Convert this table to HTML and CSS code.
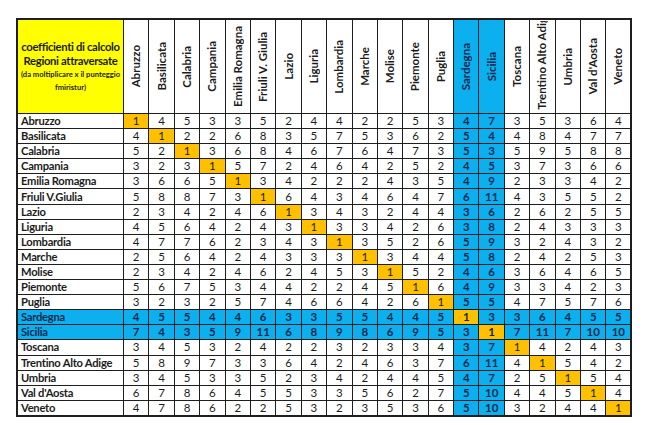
FILE: index.html
```html
<!DOCTYPE html>
<html lang="it">
<head>
<meta charset="utf-8">
<title>Coefficienti di calcolo</title>
<link rel="stylesheet" href="styles.css">
</head>
<body>
<table class="grid">
<colgroup>
<col class="c-label">
<col class="c-n"><col class="c-n"><col class="c-n"><col class="c-n"><col class="c-n">
<col class="c-n"><col class="c-n"><col class="c-n"><col class="c-n"><col class="c-n">
<col class="c-n"><col class="c-n"><col class="c-n"><col class="c-n"><col class="c-n">
<col class="c-n"><col class="c-n"><col class="c-n"><col class="c-n"><col class="c-n">
</colgroup>
<thead>
<tr>
<th class="title">
<div class="t1">coefficienti di calcolo</div>
<div class="t1">Regioni attraversate</div>
<div class="t2">(da moltiplicare x il punteggio</div>
<div class="t2">fmiristur)</div>
</th>
<th><div class="vh"><span>Abruzzo</span></div></th>
<th><div class="vh"><span>Basilicata</span></div></th>
<th><div class="vh"><span>Calabria</span></div></th>
<th><div class="vh"><span>Campania</span></div></th>
<th><div class="vh"><span>Emilia Romagna</span></div></th>
<th><div class="vh"><span>Friuli V. Giulia</span></div></th>
<th><div class="vh"><span>Lazio</span></div></th>
<th><div class="vh"><span>Liguria</span></div></th>
<th><div class="vh"><span>Lombardia</span></div></th>
<th><div class="vh"><span>Marche</span></div></th>
<th><div class="vh"><span>Molise</span></div></th>
<th><div class="vh"><span>Piemonte</span></div></th>
<th><div class="vh"><span>Puglia</span></div></th>
<th class="b"><div class="vh"><span>Sardegna</span></div></th>
<th class="b"><div class="vh"><span>Sicilia</span></div></th>
<th><div class="vh"><span>Toscana</span></div></th>
<th><div class="vh bottom"><span>Trentino Alto Adige</span></div></th>
<th><div class="vh"><span>Umbria</span></div></th>
<th><div class="vh"><span>Val d'Aosta</span></div></th>
<th><div class="vh"><span>Veneto</span></div></th>
</tr>
</thead>
<tbody>
<tr><th>Abruzzo</th><td class="o">1</td><td>4</td><td>5</td><td>3</td><td>3</td><td>5</td><td>2</td><td>4</td><td>4</td><td>2</td><td>2</td><td>5</td><td>3</td><td class="b">4</td><td class="b">7</td><td>3</td><td>5</td><td>3</td><td>6</td><td>4</td></tr>
<tr><th>Basilicata</th><td>4</td><td class="o">1</td><td>2</td><td>2</td><td>6</td><td>8</td><td>3</td><td>5</td><td>7</td><td>5</td><td>3</td><td>6</td><td>2</td><td class="b">5</td><td class="b">4</td><td>4</td><td>8</td><td>4</td><td>7</td><td>7</td></tr>
<tr><th>Calabria</th><td>5</td><td>2</td><td class="o">1</td><td>3</td><td>6</td><td>8</td><td>4</td><td>6</td><td>7</td><td>6</td><td>4</td><td>7</td><td>3</td><td class="b">5</td><td class="b">3</td><td>5</td><td>9</td><td>5</td><td>8</td><td>8</td></tr>
<tr><th>Campania</th><td>3</td><td>2</td><td>3</td><td class="o">1</td><td>5</td><td>7</td><td>2</td><td>4</td><td>6</td><td>4</td><td>2</td><td>5</td><td>2</td><td class="b">4</td><td class="b">5</td><td>3</td><td>7</td><td>3</td><td>6</td><td>6</td></tr>
<tr><th>Emilia Romagna</th><td>3</td><td>6</td><td>6</td><td>5</td><td class="o">1</td><td>3</td><td>4</td><td>2</td><td>2</td><td>2</td><td>4</td><td>3</td><td>5</td><td class="b">4</td><td class="b">9</td><td>2</td><td>3</td><td>3</td><td>4</td><td>2</td></tr>
<tr><th>Friuli V.Giulia</th><td>5</td><td>8</td><td>8</td><td>7</td><td>3</td><td class="o">1</td><td>6</td><td>4</td><td>3</td><td>4</td><td>6</td><td>4</td><td>7</td><td class="b">6</td><td class="b">11</td><td>4</td><td>3</td><td>5</td><td>5</td><td>2</td></tr>
<tr><th>Lazio</th><td>2</td><td>3</td><td>4</td><td>2</td><td>4</td><td>6</td><td class="o">1</td><td>3</td><td>4</td><td>3</td><td>2</td><td>4</td><td>4</td><td class="b">3</td><td class="b">6</td><td>2</td><td>6</td><td>2</td><td>5</td><td>5</td></tr>
<tr><th>Liguria</th><td>4</td><td>5</td><td>6</td><td>4</td><td>2</td><td>4</td><td>3</td><td class="o">1</td><td>3</td><td>3</td><td>4</td><td>2</td><td>6</td><td class="b">3</td><td class="b">8</td><td>2</td><td>4</td><td>3</td><td>3</td><td>3</td></tr>
<tr><th>Lombardia</th><td>4</td><td>7</td><td>7</td><td>6</td><td>2</td><td>3</td><td>4</td><td>3</td><td class="o">1</td><td>3</td><td>5</td><td>2</td><td>6</td><td class="b">5</td><td class="b">9</td><td>3</td><td>2</td><td>4</td><td>3</td><td>2</td></tr>
<tr><th>Marche</th><td>2</td><td>5</td><td>6</td><td>4</td><td>2</td><td>4</td><td>3</td><td>3</td><td>3</td><td class="o">1</td><td>3</td><td>4</td><td>4</td><td class="b">5</td><td class="b">8</td><td>2</td><td>4</td><td>2</td><td>5</td><td>3</td></tr>
<tr><th>Molise</th><td>2</td><td>3</td><td>4</td><td>2</td><td>4</td><td>6</td><td>2</td><td>4</td><td>5</td><td>3</td><td class="o">1</td><td>5</td><td>2</td><td class="b">4</td><td class="b">6</td><td>3</td><td>6</td><td>4</td><td>6</td><td>5</td></tr>
<tr><th>Piemonte</th><td>5</td><td>6</td><td>7</td><td>5</td><td>3</td><td>4</td><td>4</td><td>2</td><td>2</td><td>4</td><td>5</td><td class="o">1</td><td>6</td><td class="b">4</td><td class="b">9</td><td>3</td><td>3</td><td>4</td><td>2</td><td>3</td></tr>
<tr><th>Puglia</th><td>3</td><td>2</td><td>3</td><td>2</td><td>5</td><td>7</td><td>4</td><td>6</td><td>6</td><td>4</td><td>2</td><td>6</td><td class="o">1</td><td class="b">5</td><td class="b">5</td><td>4</td><td>7</td><td>5</td><td>7</td><td>6</td></tr>
<tr class="row-b"><th>Sardegna</th><td>4</td><td>5</td><td>5</td><td>4</td><td>4</td><td>6</td><td>3</td><td>3</td><td>5</td><td>5</td><td>4</td><td>4</td><td>5</td><td class="o">1</td><td>3</td><td>3</td><td>6</td><td>4</td><td>5</td><td>5</td></tr>
<tr class="row-b"><th>Sicilia</th><td>7</td><td>4</td><td>3</td><td>5</td><td>9</td><td>11</td><td>6</td><td>8</td><td>9</td><td>8</td><td>6</td><td>9</td><td>5</td><td>3</td><td class="o">1</td><td>7</td><td>11</td><td>7</td><td>10</td><td>10</td></tr>
<tr><th>Toscana</th><td>3</td><td>4</td><td>5</td><td>3</td><td>2</td><td>4</td><td>2</td><td>2</td><td>3</td><td>2</td><td>3</td><td>3</td><td>4</td><td class="b">3</td><td class="b">7</td><td class="o">1</td><td>4</td><td>2</td><td>4</td><td>3</td></tr>
<tr><th>Trentino Alto Adige</th><td>5</td><td>8</td><td>9</td><td>7</td><td>3</td><td>3</td><td>6</td><td>4</td><td>2</td><td>4</td><td>6</td><td>3</td><td>7</td><td class="b">6</td><td class="b">11</td><td>4</td><td class="o">1</td><td>5</td><td>4</td><td>2</td></tr>
<tr><th>Umbria</th><td>3</td><td>4</td><td>5</td><td>3</td><td>3</td><td>5</td><td>2</td><td>3</td><td>4</td><td>2</td><td>4</td><td>4</td><td>5</td><td class="b">4</td><td class="b">7</td><td>2</td><td>5</td><td class="o">1</td><td>5</td><td>4</td></tr>
<tr><th>Val d'Aosta</th><td>6</td><td>7</td><td>8</td><td>6</td><td>4</td><td>5</td><td>5</td><td>3</td><td>3</td><td>5</td><td>6</td><td>2</td><td>7</td><td class="b">5</td><td class="b">10</td><td>4</td><td>4</td><td>5</td><td class="o">1</td><td>4</td></tr>
<tr><th>Veneto</th><td>4</td><td>7</td><td>8</td><td>6</td><td>2</td><td>2</td><td>5</td><td>3</td><td>2</td><td>3</td><td>5</td><td>3</td><td>6</td><td class="b">5</td><td class="b">10</td><td>3</td><td>2</td><td>4</td><td>4</td><td class="o">1</td></tr>
</tbody>
</table>
</body>
</html>
```

FILE: styles.css
```css
html, body {
  margin: 0;
  padding: 0;
  background: #ffffff;
}

body {
  padding: 18px 0 0 16px;
  font-family: Lato, "Open Sans", sans-serif;
  color: #1c1c1c;
}

.grid {
  border-collapse: collapse;
  table-layout: fixed;
  width: 615px;
  border: 2px solid #1e1e1e;
}

.c-label { width: 106.5px; }
.c-n { width: 25.4px; }

.grid th,
.grid td {
  border: 1.5px solid #1e1e1e;
  padding: 0;
  height: 14.1px;
  line-height: 12px;
  font-size: 11.5px;
  text-align: center;
  vertical-align: middle;
  white-space: nowrap;
  overflow: hidden;
}

.grid tbody th {
  text-align: left;
  padding-left: 3px;
  font-weight: 700;
  font-size: 11.2px;
  letter-spacing: -0.25px;
}

.grid thead th {
  height: 93px;
  font-weight: 700;
}

.grid thead th.title {
  background: #ffff00;
  padding: 0;
}

.t1 {
  font-size: 11.3px;
  line-height: 14px;
  font-weight: 700;
  letter-spacing: -0.35px;
}

.t2 {
  font-size: 7.6px;
  line-height: 13px;
  font-weight: 700;
}

.vh {
  height: 92px;
  display: flex;
  align-items: center;
  justify-content: center;
  overflow: hidden;
}

.vh.bottom {
  align-items: flex-end;
  padding-bottom: 3px;
  height: 89px;
}

.vh span {
  writing-mode: vertical-rl;
  transform: rotate(180deg);
  white-space: nowrap;
  font-size: 11.5px;
  line-height: 12px;
  font-weight: 700;
}

.grid .b,
.grid .row-b th,
.grid .row-b td {
  background: #0cb0ee;
  color: #10284c;
  font-weight: 700;
}

.grid .o,
.grid .row-b td.o {
  background: #ffc000;
}
```
